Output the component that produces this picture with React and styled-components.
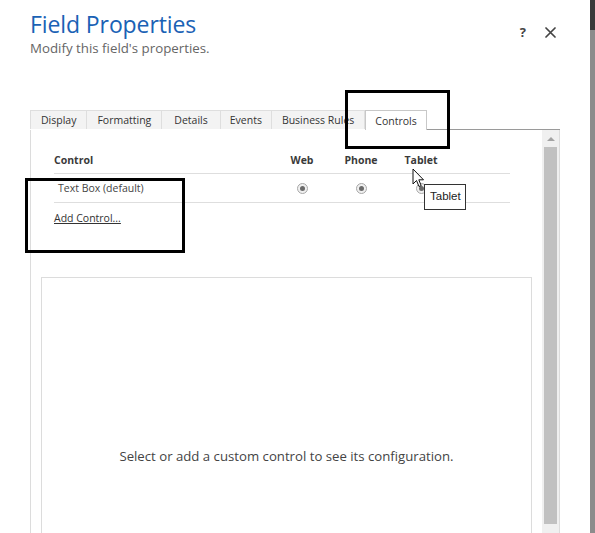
import styled, { createGlobalStyle } from 'styled-components';

const GlobalStyle = createGlobalStyle`
  html, body {
    margin: 0;
    padding: 0;
    background: #ffffff;
    overflow: hidden;
  }
  body {
    font-family: "Open Sans", "Noto Sans", Arial, sans-serif;
    color: #333;
  }
`;

// Whole window: dialog plus the thin strip of the page behind it
const Screen = styled.div`
  position: relative;
  width: 595px;
  height: 533px;
  display: flex;
  overflow: hidden;
`;

const Dialog = styled.div`
  width: 590px;
  height: 533px;
  background: #fff;
  display: flex;
  flex-direction: column;
  overflow: hidden;
`;

const PageEdge = styled.div`
  width: 5px;
  background: linear-gradient(to bottom, #3a3a3a 0, #3a3a3a 30px, #8c8c8c 30px, #8c8c8c 100%);
`;

const Header = styled.div`
  flex-shrink: 0;
  display: flex;
  justify-content: space-between;
  align-items: flex-start;
  padding: 9px 34px 0 30px;
  height: 110px;
  box-sizing: border-box;
`;

const TitleBlock = styled.div`
  display: flex;
  flex-direction: column;
`;

const Title = styled.h1`
  margin: 0;
  font-size: 23px;
  font-weight: 400;
  line-height: 30px;
  color: #1a62b5;
  letter-spacing: -0.1px;
`;

const Subtitle = styled.div`
  font-size: 13.3px;
  line-height: 18px;
  color: #666;
`;

const HeaderIcons = styled.div`
  display: flex;
  align-items: center;
  gap: 19px;
  margin-top: 15px;
`;

const HelpIcon = styled.span`
  font-size: 13px;
  font-weight: 700;
  color: #444;
  line-height: 16px;
`;

const CloseIcon = styled.svg`
  display: block;
`;

const TabRow = styled.div`
  flex-shrink: 0;
  display: flex;
  margin-left: 30px;
  width: 530px;
  height: 20px;
`;

const Tab = styled.div`
  box-sizing: border-box;
  padding: 0 ${p => p.$pad || 10}px;
  height: ${p => (p.$active ? 20 : 19)}px;
  display: flex;
  align-items: center;
  font-size: 10.5px;
  color: #333;
  background: ${p => (p.$active ? '#fff' : '#f3f3f3')};
  border: 1px solid ${p => (p.$active ? '#c8c8c8' : '#dedede')};
  border-bottom: none;
  border-left-width: ${p => (p.$first || p.$active ? 1 : 0)}px;
  white-space: nowrap;
`;

const TabFiller = styled.div`
  flex: 1;
  border-bottom: 1px solid #9a9a9a;
`;

const Panel = styled.div`
  margin-left: 30px;
  width: 530px;
  flex: 1;
  min-height: 0;
  overflow: hidden;
  display: flex;
  border-left: 1px solid #dcdcdc;
  border-right: 1px solid #dcdcdc;
  box-sizing: border-box;
`;

const Content = styled.div`
  flex: 1;
  display: flex;
  flex-direction: column;
`;

const Table = styled.div`
  margin: 16px 0 0 23px;
  width: 456px;
`;

const Row = styled.div`
  display: grid;
  grid-template-columns: 220px 56px 62px 58px 1fr;
  align-items: center;
  height: ${p => p.$h}px;
  border-bottom: 1px solid #dedede;
  font-size: 10.5px;
  font-weight: ${p => (p.$head ? 700 : 400)};
  color: ${p => (p.$head ? '#3a3a3a' : '#444')};
`;

const Cell = styled.div`
  padding-left: ${p => p.$indent || 0}px;
  display: flex;
  justify-content: ${p => (p.$center ? 'center' : 'flex-start')};
`;

const Radio = styled.span`
  width: 9px;
  height: 9px;
  border-radius: 50%;
  border: 1px solid #a8a8a8;
  background: #f0f0f0;
  display: flex;
  align-items: center;
  justify-content: center;
  &::after {
    content: '';
    width: 5px;
    height: 5px;
    border-radius: 50%;
    background: #6a6a6a;
  }
`;

const AddLink = styled.a`
  margin: 8px 0 0 23px;
  font-size: 10.5px;
  color: #333;
  text-decoration: underline;
  align-self: flex-start;
`;

const ConfigBox = styled.div`
  flex-shrink: 0;
  margin: 52px 0 0 10px;
  width: 491px;
  height: 358px;
  box-sizing: border-box;
  border: 1px solid #dcdcdc;
  display: flex;
  align-items: center;
  justify-content: center;
  font-size: 13.2px;
  color: #444;
`;

const ScrollTrack = styled.div`
  width: 17px;
  background: #f0f0f0;
  display: flex;
  flex-direction: column;
  align-items: center;
`;

const ScrollArrow = styled.div`
  height: 17px;
  display: flex;
  align-items: center;
  justify-content: center;
  &::before {
    content: '';
    border-left: 4px solid transparent;
    border-right: 4px solid transparent;
    border-bottom: 4px solid #a3a3a3;
  }
`;

const ScrollThumb = styled.div`
  width: 13px;
  height: 377px;
  background: #c1c1c1;
`;

// Overlays: annotation boxes, tooltip and mouse pointer drawn over the dialog
const Annotation = styled.div`
  position: absolute;
  left: ${p => p.$x}px;
  top: ${p => p.$y}px;
  width: ${p => p.$w}px;
  height: ${p => p.$h}px;
  box-sizing: border-box;
  border: 3px solid #000;
`;

const Tooltip = styled.div`
  position: absolute;
  left: 424px;
  top: 184px;
  padding: 5px 4px 6px 5px;
  background: #fff;
  border: 1px solid #333;
  font-family: "Liberation Sans", Arial, sans-serif;
  font-size: 11.5px;
  line-height: 13px;
  color: #222;
`;

const Pointer = styled.svg`
  position: absolute;
  left: 412px;
  top: 168px;
`;

const radios = [0, 1, 2];

export default function App() {
  return (
    <>
      <GlobalStyle />
      <Screen>
        <Dialog>
          <Header>
            <TitleBlock>
              <Title>Field Properties</Title>
              <Subtitle>Modify this field's properties.</Subtitle>
            </TitleBlock>
            <HeaderIcons>
              <HelpIcon>?</HelpIcon>
              <CloseIcon width="11" height="11" viewBox="0 0 11 11">
                <path d="M1 1 L10 10 M10 1 L1 10" stroke="#444" strokeWidth="1.7" strokeLinecap="round" />
              </CloseIcon>
            </HeaderIcons>
          </Header>

          <TabRow>
            <Tab $first>Display</Tab>
            <Tab>Formatting</Tab>
            <Tab $pad={12}>Details</Tab>
            <Tab $pad={9}>Events</Tab>
            <Tab>Business Rules</Tab>
            <Tab $active $pad={9}>Controls</Tab>
            <TabFiller />
          </TabRow>

          <Panel>
            <Content>
              <Table>
                <Row $head $h={27}>
                  <Cell>Control</Cell>
                  <Cell $center>Web</Cell>
                  <Cell $center>Phone</Cell>
                  <Cell $center>Tablet</Cell>
                  <Cell />
                </Row>
                <Row $h={28}>
                  <Cell $indent={4}>Text Box (default)</Cell>
                  {radios.map(i => (
                    <Cell $center key={i}>
                      <Radio />
                    </Cell>
                  ))}
                  <Cell />
                </Row>
              </Table>
              <AddLink>Add Control...</AddLink>
              <ConfigBox>Select or add a custom control to see its configuration.</ConfigBox>
            </Content>
            <ScrollTrack>
              <ScrollArrow />
              <ScrollThumb />
            </ScrollTrack>
          </Panel>
        </Dialog>
        <PageEdge />

        <Annotation $x={345} $y={90} $w={105} $h={59} />
        <Annotation $x={25} $y={178} $w={160} $h={75} />
        <Tooltip>Tablet</Tooltip>
        <Pointer width="14" height="21" viewBox="0 0 14 21">
          <path d="M1 1 L1 16 L4.5 12.5 L7 18.5 L9.2 17.6 L6.8 11.8 L11.5 11.8 Z" fill="#fff" stroke="#111" strokeWidth="1" strokeLinejoin="round" />
        </Pointer>
      </Screen>
    </>
  );
}
